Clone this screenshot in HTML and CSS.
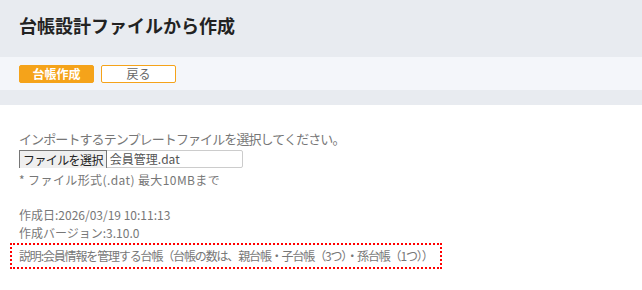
FILE: index.html
```html
<!DOCTYPE html>
<html lang="ja">
<head>
    <meta charset="UTF-8">
    <meta name="viewport" content="width=device-width, initial-scale=1.0">
    <title>台帳設計ファイルから作成</title>
    <link rel="stylesheet" href="styles.css">
</head>
<body>
    <header class="page-head">
        <h1>台帳設計ファイルから作成</h1>
    </header>
    <div class="toolbar">
        <button class="btn btn-primary">台帳作成</button>
        <button class="btn">戻る</button>
    </div>
    <div class="spacer"></div>
    <main class="content">
        <p class="lead">インポートするテンプレートファイルを選択してください。</p>
        <div class="file-field">
            <span class="file-btn">ファイルを選択</span>
            <span class="file-name">会員管理.dat</span>
        </div>
        <p class="note">* ファイル形式(.dat) 最大10MBまで</p>
        <div class="meta">
            <p>作成日:2026/03/19 10:11:13</p>
            <p>作成バージョン:3.10.0</p>
        </div>
        <div class="desc">説明:会員情報を管理する台帳（台帳の数は、親台帳・子台帳（3つ）・孫台帳（1つ））</div>
    </main>
</body>
</html>
```

FILE: styles.css
```css
body {
    margin: 0;
    padding: 0;
    background-color: #fff;
    font-family: "Noto Sans CJK JP", "Noto Sans", sans-serif;
    color: #777;
}

.page-head {
    height: 57px;
    background-color: #e8ebf0;
    box-sizing: border-box;
    padding: 12px 19px 0;
}

.page-head h1 {
    margin: 0;
    font-size: 18px;
    line-height: 26px;
    font-weight: bold;
    color: #222;
}

.toolbar {
    display: flex;
    gap: 7px;
    height: 33px;
    box-sizing: border-box;
    padding: 8px 19px 0;
    background-color: #f4f6fa;
}

.btn {
    width: 75px;
    height: 18px;
    padding: 0;
    font-family: inherit;
    font-size: 12px;
    line-height: 16px;
    color: #666;
    background-color: #fff;
    border: 1px solid #f5a31a;
    border-radius: 2px;
    cursor: pointer;
}

.btn-primary {
    background-color: #f5a31a;
    color: #fff;
    font-weight: bold;
}

.spacer {
    height: 15px;
    background-color: #e8ebf0;
}

.content {
    padding: 23px 19px 0;
}

.lead {
    margin: 0;
    font-size: 13px;
    line-height: 22px;
    letter-spacing: -0.9px;
}

.file-field {
    display: flex;
    width: 224px;
    height: 18px;
    box-sizing: border-box;
    border: 1px solid #ccc;
    border-radius: 2px;
    font-size: 12px;
    line-height: 16px;
}

.file-btn {
    padding: 0 3px;
    letter-spacing: -0.6px;
    color: #222;
    background-color: #efefef;
    border: 1px solid #767676;
    border-bottom: none;
    margin: -1px 0 -1px -1px;
    line-height: 17px;
}

.file-name {
    padding-left: 3px;
    color: #555;
}

.note {
    margin: 3px 0 0;
    font-size: 12px;
    line-height: 18px;
    letter-spacing: 0.4px;
}

.meta {
    margin-top: 17px;
    font-size: 12px;
    line-height: 18px;
}

.meta p {
    margin: 0;
}

.desc {
    display: inline-block;
    margin: -5px 0 0 -9px;
    padding: 0 7px;
    font-size: 12px;
    line-height: 22px;
    letter-spacing: -1.15px;
    border: 2px dotted #ff0000;
}
```
